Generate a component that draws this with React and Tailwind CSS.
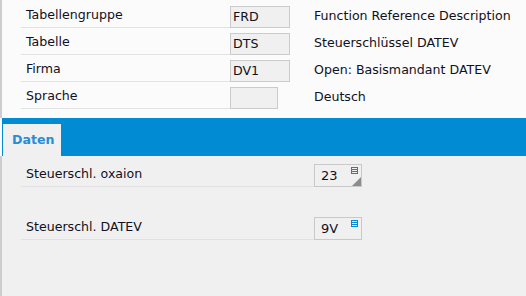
import React from "react";

const headRows = [
  { label: "Tabellengruppe", value: "FRD", desc: "Function Reference Description", wide: true },
  { label: "Tabelle", value: "DTS", desc: "Steuerschlüssel DATEV", wide: true },
  { label: "Firma", value: "DV1", desc: "Open: Basismandant DATEV", wide: true },
  { label: "Sprache", value: "", desc: "Deutsch", wide: false },
];

const ListIcon = () => (
  <div className="absolute right-[3px] top-[2px] w-[7px] h-[7px] border border-[#0a8ad6] flex flex-col justify-evenly z-10">
    <div className="h-[1px] bg-[#0a8ad6]" />
    <div className="h-[1px] bg-[#0a8ad6]" />
  </div>
);

const Corner = () => (
  <svg width="9" height="9" viewBox="0 0 9 9" className="absolute right-0 bottom-0">
    <polygon points="9,0 9,9 0,9" fill="#8c8c8c" />
  </svg>
);

const DataField = ({ label, value, corner, className }) => (
  <div className={`flex items-end h-[27px] ${className}`}>
    <div className="w-[293px] ml-[21px] h-full pl-[5px] flex items-center pt-[2px] border-b border-[#e2e2e2]">
      {label}
    </div>
    <div className="relative w-[48px] h-[23px] border border-[#c9c9c9] bg-[#f0f0f0] pl-[6px] flex items-center text-[13px]">
      {value}
      {corner && <Corner />}
      <ListIcon />
    </div>
  </div>
);

const App = () => {
  return (
    <div
      className="w-[526px] h-[296px] bg-[#f0f0f0] text-[12.6px] text-[#111122] overflow-hidden flex flex-col"
      style={{ fontFamily: '"DejaVu Sans", Verdana, sans-serif' }}
    >
      <div className="h-[118px] bg-[#fbfbfb] border-l-2 border-[#cdcdcd] pt-[1px]">
        {headRows.map((row) => (
          <div key={row.label} className="flex items-end h-[27px]">
            <div className="w-[209px] ml-[19px] h-full pl-[5px] flex items-center pt-[3px] border-b border-[#e2e2e2]">
              {row.label}
            </div>
            <div className="w-[84px] h-full flex items-end">
              <div
                className={`${row.wide ? "w-[60px]" : "w-[48px]"} h-[22px] border border-[#cbcbcb] bg-[#f0f0f0] pl-[2px] flex items-center pt-[1px]`}
              >
                {row.value}
              </div>
            </div>
            <div className="h-full flex items-center pt-[3px]">{row.desc}</div>
          </div>
        ))}
      </div>

      <div className="h-[38px] bg-[#008bd3] border-l-2 border-[#fbfbfb] flex items-end pl-[1px]">
        <div className="w-[58px] h-[32px] bg-[#f0f0f0] flex items-center pl-[9px] font-bold text-[#2a8bd6]">
          Daten
        </div>
      </div>

      <div className="flex-1 border-l-2 border-[#cdcdcd]">
        <DataField label="Steuerschl. oxaion" value="23" corner className="mt-[4px] ml-[-2px]" />
        <DataField label="Steuerschl. DATEV" value="9V" className="mt-[26px] ml-[-2px]" />
      </div>
    </div>
  );
};

export default App;
